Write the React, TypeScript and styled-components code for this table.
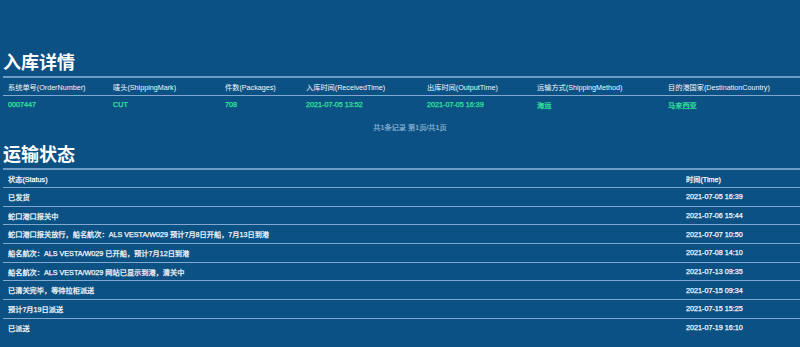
import React from "react";
import styled, { createGlobalStyle } from "styled-components";

const Global = createGlobalStyle`
  html, body {
    margin: 0;
    padding: 0;
    background: #0b5184;
    overflow: hidden;
  }
  body {
    font-family: "Liberation Sans", Arial, "Noto Sans CJK SC", sans-serif;
    color: #ffffff;
  }
`;

const Page = styled.div`
  width: 814px;
  padding: 52px 0 0 3px;
  display: flex;
  flex-direction: column;
`;

const Title = styled.h2<{ $gapTop?: number }>`
  margin: ${(p) => p.$gapTop ?? 0}px 0 2px;
  font-size: 18px;
  line-height: 22px;
  font-weight: 700;
  color: #ffffff;
`;

const Table = styled.div<{ $cols: string }>`
  display: grid;
  grid-template-columns: ${(p) => p.$cols};
  border-top: 2px solid #6f9cc6;
`;

const Cell = styled.div<{
  $h: number;
  $tone?: "green" | "white";
  $line?: boolean;
  $strong?: boolean;
}>`
  box-sizing: border-box;
  height: ${(p) => p.$h}px;
  display: flex;
  align-items: center;
  padding: 0 5px;
  font-size: 7.2px;
  font-weight: 400;
  white-space: nowrap;
  color: ${(p) => (p.$tone === "green" ? "#34e39a" : "#f4f7fa")};
  -webkit-text-stroke: ${(p) => (p.$strong ? "0.25px currentColor" : "0")};
  border-top: ${(p) => (p.$line ? "1px solid #7ea8cf" : "none")};
`;

const Pager = styled.div`
  margin-top: 9px;
  height: 12px;
  line-height: 12px;
  text-align: center;
  font-size: 7.2px;
  color: #8fb4d6;
  -webkit-text-stroke: 0.2px currentColor;
`;

const inbound = {
  head: [
    "系统单号(OrderNumber)",
    "唛头(ShippingMark)",
    "件数(Packages)",
    "入库时间(ReceivedTime)",
    "出库时间(OutputTime)",
    "运输方式(ShippingMethod)",
    "目的港国家(DestinationCountry)",
  ],
  row: ["0007447", "CUT", "708", "2021-07-05 13:52", "2021-07-05 16:39", "海运", "马来西亚"],
};

const tracking: [string, string][] = [
  ["已发货", "2021-07-05 16:39"],
  ["蛇口港口报关中", "2021-07-06 15:44"],
  ["蛇口港口报关放行，船名航次：ALS VESTA/W029 预计7月8日开船，7月13日到港", "2021-07-07 10:50"],
  ["船名航次：ALS VESTA/W029 已开船，预计7月12日到港", "2021-07-08 14:10"],
  ["船名航次：ALS VESTA/W029 网站已显示到港，清关中", "2021-07-13 09:35"],
  ["已清关完毕，等待拉柜派送", "2021-07-15 09:34"],
  ["预计7月19日派送", "2021-07-15 15:25"],
  ["已派送", "2021-07-19 16:10"],
];

export default function App() {
  return (
    <>
      <Global />
      <Page>
        <Title>入库详情</Title>
        <Table $cols="105px 112px 81px 121px 110px 131px 1fr">
          {inbound.head.map((h) => (
            <Cell key={h} $h={17}>
              {h}
            </Cell>
          ))}
          {inbound.row.map((v, i) => (
            <Cell key={i} $h={18} $line $strong $tone="green">
              {v}
            </Cell>
          ))}
        </Table>
        <Pager>共1条记录 第1页/共1页</Pager>

        <Title $gapTop={10}>运输状态</Title>
        <Table $cols="678px 1fr">
          <Cell $h={17} $strong>
            状态(Status)
          </Cell>
          <Cell $h={17} $strong>
            时间(Time)
          </Cell>
          {tracking.map(([status, time]) => (
            <React.Fragment key={time}>
              <Cell $h={18.7} $line $strong>
                {status}
              </Cell>
              <Cell $h={18.7} $line $strong>
                {time}
              </Cell>
            </React.Fragment>
          ))}
        </Table>
      </Page>
    </>
  );
}
